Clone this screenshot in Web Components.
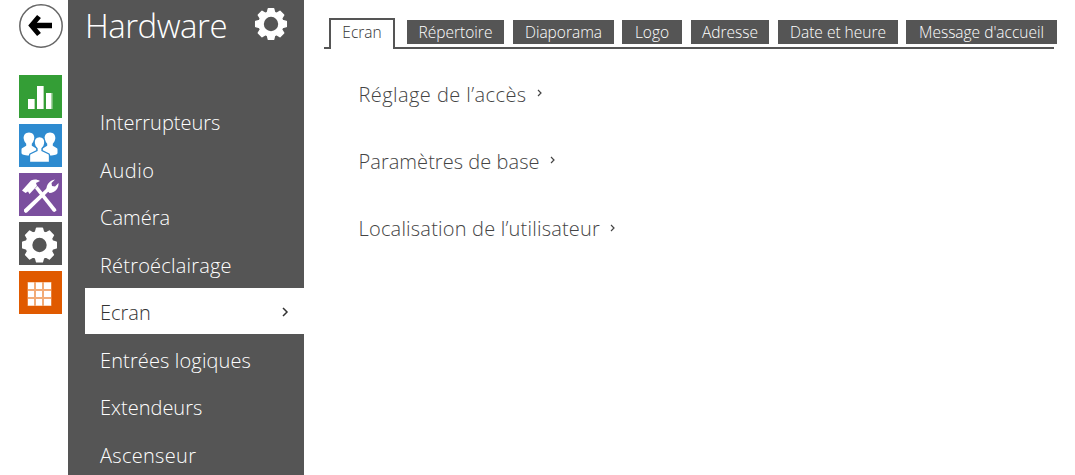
<!DOCTYPE html>
<html lang="fr">
<head>
<meta charset="utf-8">
<title>Hardware</title>
<style>
  html, body { margin: 0; height: 475px; overflow: hidden; background: #fff; }
  body { display: flex; font-family: "Open Sans", "Liberation Sans", sans-serif; font-weight: 300; }
</style>
</head>
<body>
<app-rail></app-rail>
<side-menu heading="Hardware">
  <menu-item>Interrupteurs</menu-item>
  <menu-item style="letter-spacing:.5px">Audio</menu-item>
  <menu-item>Caméra</menu-item>
  <menu-item style="letter-spacing:.2px">Rétroéclairage</menu-item>
  <menu-item active>Ecran</menu-item>
  <menu-item style="letter-spacing:.13px">Entrées logiques</menu-item>
  <menu-item>Extendeurs</menu-item>
  <menu-item style="letter-spacing:.3px">Ascenseur</menu-item>
</side-menu>
<main-panel>
  <tab-bar>
    <tab-item active w="66">Ecran</tab-item>
    <tab-item w="97" gap="9">Répertoire</tab-item>
    <tab-item w="101" gap="8">Diaporama</tab-item>
    <tab-item w="60" gap="9">Logo</tab-item>
    <tab-item w="78" gap="9">Adresse</tab-item>
    <tab-item w="120" gap="8">Date et heure</tab-item>
    <tab-item w="151">Message d'accueil</tab-item>
  </tab-bar>
  <section-link style="letter-spacing:.43px">Réglage de l’accès</section-link>
  <section-link style="letter-spacing:.05px">Paramètres de base</section-link>
  <section-link style="letter-spacing:.2px">Localisation de l’utilisateur</section-link>
</main-panel>

<script>
// 8 tooth gear outline, centred on 0,0
function gearPath(outer, inner) {
  const pts = [];
  for (let i = 0; i < 8; i++) {
    const a = i * Math.PI / 4;
    const t = [[-0.3, inner], [-0.17, outer], [0.17, outer], [0.3, inner]];
    t.forEach(([da, r]) => pts.push((r * Math.sin(a + da)).toFixed(2) + ' ' + (-r * Math.cos(a + da)).toFixed(2)));
  }
  return 'M' + pts.join('L') + 'Z';
}

const PERSON = 'c-3.600 0-5.800 2.900-5.300 6.300 .3 2.300 1.500 3.900 2.500 4.900v2l-4.200 2.500c-.4.300-.5.700-.5 1.500v3.300c0 1.500 3 2.500 7.500 2.500s7.500-1 7.500-2.500v-3.300c0-.8-.1-1.200-.5-1.500l-4.200-2.500v-2c1-1 2.200-2.600 2.500-4.900.5-3.400-1.700-6.300-5.300-6.300z';

const ICONS = {
  chart: `<path fill="#fff" d="M9 24h6v10H9zM18 11h6v23h-6zM27 18h5.500v16H27z"/>
          <path fill="#b5dab2" d="M15 24h1v10h-1zM24 11h1v23h-1zM32.500 18h1v16h-1z"/>`,
  users: `<g fill="#fff">
            <path d="M10 8.500${PERSON}"/>
            <path d="M31 8.500${PERSON}"/>
            <path stroke="#2e8bd0" stroke-width="1.300" d="M20.500 12.500c-3.700 0-5.800 3-5.300 6.800.3 2.500 1.500 4.200 2.800 5.200v2l-7 3.500c-.5.500-.5 1-.5 2v6.500h20V32c0-1 0-1.500-.5-2l-7-3.500v-2c1.300-1 2.500-2.700 2.800-5.200.5-3.800-1.600-6.800-5.300-6.800z"/>
          </g>`,
  tools: `<g fill="#fff">
            <path d="M3 17.500 12 7.500c3-1.500 6-1.500 9 .5l-4 2 1 3-7.500 8-1.500-2.500-2.500 1.500z"/>
            <path d="m16 15.500 2.500-2.500 18.500 23 .5 1.500-2 1.500-1.500-.5z"/>
            <path d="M5 36.500 28 15l2.500 2.500L8 39.500l-1.500.5-1.500-1.500z"/>
            <path d="M27.500 17c-.5-5 3-9.500 8.500-10.500l-3.500 3.500.5 3 3 .5 3.500-3.500c.5 5-3 9.500-9 10z"/>
          </g>`,
  grid: `<path fill="#f2ab76" d="M8.500 11h24v24h-24z"/>
         <path fill="#fff" d="M9 11.500h6V18H9zM17 11.500h6V18H17zM25 11.500h7V18h-7zM9 20h6V26H9zM17 20h6V26H17zM25 20h7V26h-7zM9 28h6v6.500H9zM17 28h6v6.500H17zM25 28h7v6.500h-7z"/>`,
  gear: `<g transform="translate(20.500 23)"><path fill="#fff" stroke="#fff" stroke-width="1.500" stroke-linejoin="round" d="${gearPath(17, 13.500)}"/><circle r="7.200" fill="#555"/></g>`
};

class RailTile extends HTMLElement {
  constructor() {
    super();
    this.attachShadow({ mode: 'open' });
    this.shadowRoot.innerHTML = `
      <style>
        :host { display: block; width: 43px; height: 43px; }
        svg { display: block; }
      </style>
      <svg width="43" height="43" viewBox="0 0 43 43">
        <rect width="43" height="43" fill="${this.getAttribute('color')}"/>
        ${ICONS[this.getAttribute('icon')]}
      </svg>`;
  }
}
customElements.define('rail-tile', RailTile);

class AppRail extends HTMLElement {
  constructor() {
    super();
    this.attachShadow({ mode: 'open' });
    this.shadowRoot.innerHTML = `
      <style>
        :host { display: flex; flex-direction: column; flex: none; width: 68px; box-sizing: border-box; padding: 4px 0 0 19px; }
        #back { display: block; margin-bottom: 27px; }
        #tiles { display: flex; flex-direction: column; gap: 6px; }
      </style>
      <svg id="back" width="44" height="44" viewBox="0 0 44 44">
        <circle cx="22" cy="22" r="21.200" fill="#fff" stroke="#666" stroke-width="1.500"/>
        <path d="M20 12.500 12.500 21.500 20 30.500" fill="none" stroke="#000" stroke-width="5"/>
        <path d="M15 21.500H33" fill="none" stroke="#000" stroke-width="5.500"/>
      </svg>
      <div id="tiles">
        <rail-tile color="#349e36" icon="chart"></rail-tile>
        <rail-tile color="#2e8bd0" icon="users"></rail-tile>
        <rail-tile color="#7b4f9e" icon="tools"></rail-tile>
        <rail-tile color="#555555" icon="gear"></rail-tile>
        <rail-tile color="#e05a00" icon="grid"></rail-tile>
      </div>`;
  }
}
customElements.define('app-rail', AppRail);

class SideMenu extends HTMLElement {
  constructor() {
    super();
    this.attachShadow({ mode: 'open' });
    this.shadowRoot.innerHTML = `
      <style>
        :host { display: block; flex: none; width: 236px; height: 475px; overflow: hidden; background: #555; color: #fff; }
        header { display: flex; justify-content: space-between; align-items: center; height: 50px; padding: 0 15px 0 17px; }
        h1 { margin: 0; font-size: 33px; font-weight: 300; letter-spacing: -0.5px; }
        svg { display: block; margin-top: -3px; }
        nav { display: flex; flex-direction: column; padding: 49px 0 0 17px; }
      </style>
      <header>
        <h1>${this.getAttribute('heading')}</h1>
        <svg width="36" height="36" viewBox="-18 -18 36 36">
          <path fill="#fff" stroke="#fff" stroke-width="1.500" stroke-linejoin="round" d="${gearPath(15.500, 12)}"/>
          <circle r="7.200" fill="#555"/>
        </svg>
      </header>
      <nav><slot></slot></nav>`;
  }
}
customElements.define('side-menu', SideMenu);

class MenuItem extends HTMLElement {
  constructor() {
    super();
    this.attachShadow({ mode: 'open' });
    this.shadowRoot.innerHTML = `
      <style>
        :host { display: flex; align-items: center; justify-content: space-between; height: 47.500px; box-sizing: border-box; padding: 0 15px 0 15px; font-size: 20px; white-space: nowrap; }
        :host([active]) { background: #fff; color: #333; height: 46px; margin: -1px 0 2.500px; padding-top: 2px; }
        svg { display: none; }
        :host([active]) svg { display: block; }
      </style>
      <slot></slot>
      <svg width="8" height="10" viewBox="0 0 8 10"><path d="M2 1l4 4-4 4" fill="none" stroke="#333" stroke-width="1.500"/></svg>`;
  }
}
customElements.define('menu-item', MenuItem);

class MainPanel extends HTMLElement {
  constructor() {
    super();
    this.attachShadow({ mode: 'open' });
    this.shadowRoot.innerHTML = `
      <style>
        :host { display: block; flex: 1; min-width: 0; padding: 18px 0 0 20px; }
        #links { display: flex; flex-direction: column; padding: 11.500px 0 0 34.500px; }
      </style>
      <slot name="tabs"></slot>
      <div id="links"><slot></slot></div>`;
    const bar = this.querySelector('tab-bar');
    if (bar) bar.slot = 'tabs';
  }
}
customElements.define('main-panel', MainPanel);

class TabBar extends HTMLElement {
  constructor() {
    super();
    this.attachShadow({ mode: 'open' });
    this.shadowRoot.innerHTML = `
      <style>
        :host { display: flex; align-items: flex-start; width: 730px; height: 31px; padding-left: 5px; box-sizing: border-box; border-bottom: 2px solid #555; }
      </style>
      <slot></slot>`;
  }
}
customElements.define('tab-bar', TabBar);

class TabItem extends HTMLElement {
  constructor() {
    super();
    this.attachShadow({ mode: 'open' });
    this.shadowRoot.innerHTML = `
      <style>
        :host { display: flex; flex: none; align-items: center; justify-content: center; box-sizing: border-box; width: var(--w); height: 24px; margin: 2px var(--gap, 0) 0 0; background: #555; color: #fff; font-size: 15.500px; white-space: nowrap; }
        :host([active]) { height: 31px; margin: 0 12px 0 0; padding-bottom: 6px; background: #fff; color: #333; border: 2px solid #555; border-bottom: 0; }
      </style>
      <slot></slot>`;
    this.style.setProperty('--w', this.getAttribute('w') + 'px');
    if (this.hasAttribute('gap')) this.style.setProperty('--gap', this.getAttribute('gap') + 'px');
  }
}
customElements.define('tab-item', TabItem);

class SectionLink extends HTMLElement {
  constructor() {
    super();
    this.attachShadow({ mode: 'open' });
    this.shadowRoot.innerHTML = `
      <style>
        :host { display: flex; align-items: center; gap: 9px; height: 67.250px; font-size: 20px; color: #444; white-space: nowrap; }
        svg { display: block; margin-top: -2px; }
      </style>
      <slot></slot>
      <svg width="8" height="10" viewBox="0 0 8 10"><path d="M2 2l3 3-3 3" fill="none" stroke="#444" stroke-width="1.200"/></svg>`;
  }
}
customElements.define('section-link', SectionLink);
</script>
</body>
</html>
